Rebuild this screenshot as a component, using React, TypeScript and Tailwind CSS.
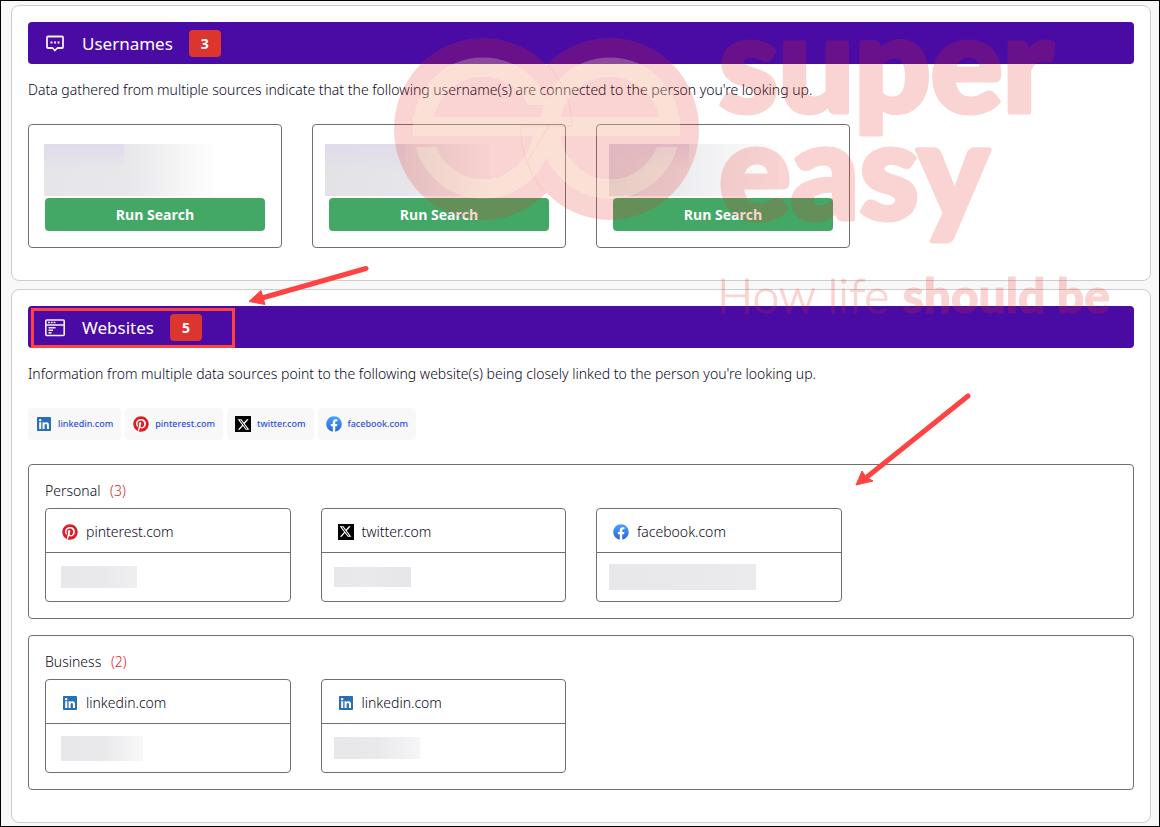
import { FaFacebook, FaLinkedin, FaPinterest } from 'react-icons/fa'
import { FaXTwitter } from 'react-icons/fa6'

type Site = 'linkedin.com' | 'pinterest.com' | 'twitter.com' | 'facebook.com'

const usernames = [
  { id: 1, hidden: 'w-[170px] -ml-px from-[#e6e6e8] via-[#e8e8ea]' },
  { id: 2, hidden: 'w-[164px] -ml-1 from-[#e3e3e6] via-[#e6e5e9]' },
  { id: 3, hidden: 'w-[170px] -ml-1 from-[#dfdde4] via-[#efeff1]' },
]

const sources: Site[] = ['linkedin.com', 'pinterest.com', 'twitter.com', 'facebook.com']

const groups: { name: string; items: { site: Site; hidden: string }[] }[] = [
  {
    name: 'Personal',
    items: [
      { site: 'pinterest.com', hidden: 'ml-[15px] w-[76px] h-[22px] to-[#efeff1]' },
      { site: 'twitter.com', hidden: 'ml-3 w-[77px] h-[20px] to-[#e6e5e9]' },
      { site: 'facebook.com', hidden: 'ml-3 w-[147px] h-[26px] to-[#ebebed]' },
    ],
  },
  {
    name: 'Business',
    items: [
      { site: 'linkedin.com', hidden: 'ml-[15px] w-[82px] h-[25px] to-[#f8f8f9]' },
      { site: 'linkedin.com', hidden: 'ml-3 w-[86px] h-[22px] to-[#f6f6f8]' },
    ],
  },
]

function SiteIcon({ site }: { site: Site }) {
  return (
    <span className="flex h-4 w-4 shrink-0 items-center justify-center">
      {site === 'linkedin.com' && <FaLinkedin size={16} className="text-[#2a6fb3]" />}
      {site === 'pinterest.com' && <FaPinterest size={16} className="text-[#dc1f26]" />}
      {site === 'facebook.com' && <FaFacebook size={16} fill="url(#facebook-blue)" />}
      {site === 'twitter.com' && (
        <span className="flex h-4 w-4 items-center justify-center bg-black">
          <FaXTwitter size={13} className="text-white" />
        </span>
      )}
    </span>
  )
}

function ChatIcon() {
  return (
    <svg width="22" height="22" viewBox="0 0 22 22" fill="none" stroke="#f4effc" strokeWidth="1.8" strokeLinejoin="round">
      <path d="M4 4.500h14a1 1 0 0 1 1 1v9.500a1 1 0 0 1-1 1h-4.600L11 18.500l-2.400-2.500H4a1 1 0 0 1-1-1V5.500a1 1 0 0 1 1-1z" />
      <path d="M6.500 10.500h2M10 10.500h2M13.500 10.500h2" />
    </svg>
  )
}

function BrowserIcon() {
  return (
    <svg width="22" height="22" viewBox="0 0 22 22" fill="none" stroke="#f4effc" strokeWidth="1.600">
      <rect x="1.800" y="4" width="18.400" height="15.500" rx="1" />
      <path d="M2 9h18M4 6.500h1.800M6.800 6.500h1.800M9.600 6.500h1.800" />
      <path d="M4.500 11.800h7M4.500 14.300h4.500M4.500 16.800h3" />
    </svg>
  )
}

function SectionHeader({ icon, title, count }: { icon: React.ReactNode; title: string; count: number }) {
  return (
    <div className="flex h-[42px] items-center gap-4 rounded bg-[#4a0ba5] px-4 text-white">
      {icon}
      <h2 className="pt-0.5 font-['Noto_Sans',sans-serif] text-[17px] leading-6">{title}</h2>
      <span className="flex h-[27px] w-8 items-center justify-center rounded bg-[#dc352f] pt-0.5 text-sm font-bold">{count}</span>
    </div>
  )
}

function Watermark() {
  return (
    <g>
      <mask id="rings">
        <g fill="none" stroke="#fff" strokeWidth="19">
          <ellipse cx="483" cy="128" rx="60" ry="61" />
          <ellipse cx="610" cy="128" rx="60" ry="61" />
        </g>
        <rect x="405" y="136" width="50" height="11" fill="#000" />
        <rect x="640" y="136" width="50" height="11" fill="#000" />
        <path d="M520 105h24l-3 12h-21z" fill="#000" />
        <rect x="413" y="117" width="267" height="19" fill="#fff" />
      </mask>
      <mask id="discs">
        <ellipse cx="483" cy="129" rx="89" ry="91" fill="#fff" />
        <ellipse cx="610" cy="129" rx="89" ry="91" fill="#fff" />
        <rect x="390" y="30" width="320" height="200" fill="#000" mask="url(#rings)" />
      </mask>
      <rect x="390" y="30" width="320" height="200" fill="#e62d23" opacity="0.2" mask="url(#discs)" />
      <rect x="390" y="30" width="320" height="200" fill="#f4b093" opacity="0.38" mask="url(#rings)" />
      <path
        d="M546 193A89 91 0 0 1 521 126H572A89 91 0 0 0 546 63M549 126l-22 36"
        fill="none"
        stroke="#e62d23"
        opacity="0.08"
      />
      <g fill="#e62d23" stroke="#e62d23" strokeWidth="5" strokeLinejoin="round" opacity="0.2" className="font-[Lato]">
        <text x="719" y="112" className="text-[134px] font-black">super</text>
        <text x="719" y="219" className="text-[134px] font-black">easy</text>
        <text x="717" y="313" strokeWidth="1" className="text-[48px] font-light">
          How life <tspan className="font-black">should be</tspan>
        </text>
      </g>
    </g>
  )
}

// Marks drawn over the report: brand watermark, highlight box and arrows
function Annotations() {
  return (
    <svg width="1160" height="827" viewBox="0 0 1160 827" className="pointer-events-none absolute -top-px -left-px">
      <defs>
        <linearGradient id="facebook-blue" x1="0" y1="0" x2="0" y2="1">
          <stop offset="0" stopColor="#45a3fb" />
          <stop offset="1" stopColor="#2f62e0" />
        </linearGradient>
      </defs>
      <Watermark />
      <g fill="none" stroke="#ff4343" strokeWidth="3">
        <rect x="32.500" y="309.500" width="201" height="37" />
        <path d="M366 268.500L262 298M968 396L867 477" strokeWidth="5" strokeLinecap="round" />
      </g>
      <path d="M249 301.500l12-11 2 7 2 7z M856 485l6-14 4 6 7 4z" fill="#ff4343" stroke="#ff4343" strokeLinejoin="round" />
    </svg>
  )
}

export default function App() {
  return (
    <div className="relative overflow-hidden border border-black bg-[#f8f8f8] pt-1 pr-2 pb-[3px] pl-2.5 font-['Open_Sans',sans-serif] text-sm leading-5 text-[#0a0824]">
      <main className="flex flex-col gap-2">
        <section className="rounded-lg border border-[#cdcdcd] bg-white px-4 pt-4 pb-8">
          <SectionHeader icon={<ChatIcon />} title="Usernames" count={3} />
          <p className="mt-4 font-['Noto_Sans',sans-serif] font-[350]">
            Data gathered from multiple sources indicate that the following username(s) are connected to the person you're looking up.
          </p>
          <div className="mt-6 grid grid-cols-4 gap-[30px]">
            {usernames.map((user) => (
              <div key={user.id} className="rounded border border-[#707070] p-4">
                <div className="flex h-[57px] items-center">
                  <div className={`h-[52px] bg-linear-to-r to-[#fdfdfd] ${user.hidden}`}>
                    <div className="h-7 w-20 bg-linear-to-b from-[#e1dbeb] to-transparent" />
                  </div>
                </div>
                <button type="button" className="h-[33px] w-full rounded bg-[#43a866] text-sm font-bold text-white">
                  Run Search
                </button>
              </div>
            ))}
          </div>
        </section>

        <section className="rounded-lg border border-[#cdcdcd] bg-white px-4 pt-4 pb-8">
          <SectionHeader icon={<BrowserIcon />} title="Websites" count={5} />
          <p className="mt-4 font-['Noto_Sans',sans-serif] font-[350]">
            Information from multiple data sources point to the following website(s) being closely linked to the person you're looking up.
          </p>
          <div className="mt-6 flex gap-1">
            {sources.map((site) => (
              <a
                key={site}
                href={`#${site}`}
                className="flex h-8 items-center gap-1.5 rounded bg-[#f8f8f8] px-2 font-['Noto_Sans',sans-serif] text-[9px] font-medium text-[#2c4ee6]"
              >
                <SiteIcon site={site} />
                {site}
              </a>
            ))}
          </div>
          <div className="mt-6 flex flex-col gap-4">
            {groups.map((group) => (
              <div key={group.name} className="rounded border border-[#707070] p-4">
                <h3 className="mb-[7px] font-['Noto_Sans',sans-serif] font-[350]">
                  {group.name} <span className="ml-1.5 text-[#dc2626]">({group.items.length})</span>
                </h3>
                <div className="grid grid-cols-4 gap-[30px]">
                  {group.items.map((item, i) => (
                    <div key={i} className="rounded border border-[#707070]">
                      <div className="flex h-11 items-center gap-2 border-b border-[#707070] px-4 pt-0.5 font-['Noto_Sans',sans-serif] font-[350]">
                        <SiteIcon site={item.site} />
                        {item.site}
                      </div>
                      <div className="flex h-12 items-center">
                        <div className={`bg-linear-to-r from-[#e8e8ea] via-[#e9e9eb] ${item.hidden}`} />
                      </div>
                    </div>
                  ))}
                </div>
              </div>
            ))}
          </div>
        </section>
      </main>
      <Annotations />
    </div>
  )
}
